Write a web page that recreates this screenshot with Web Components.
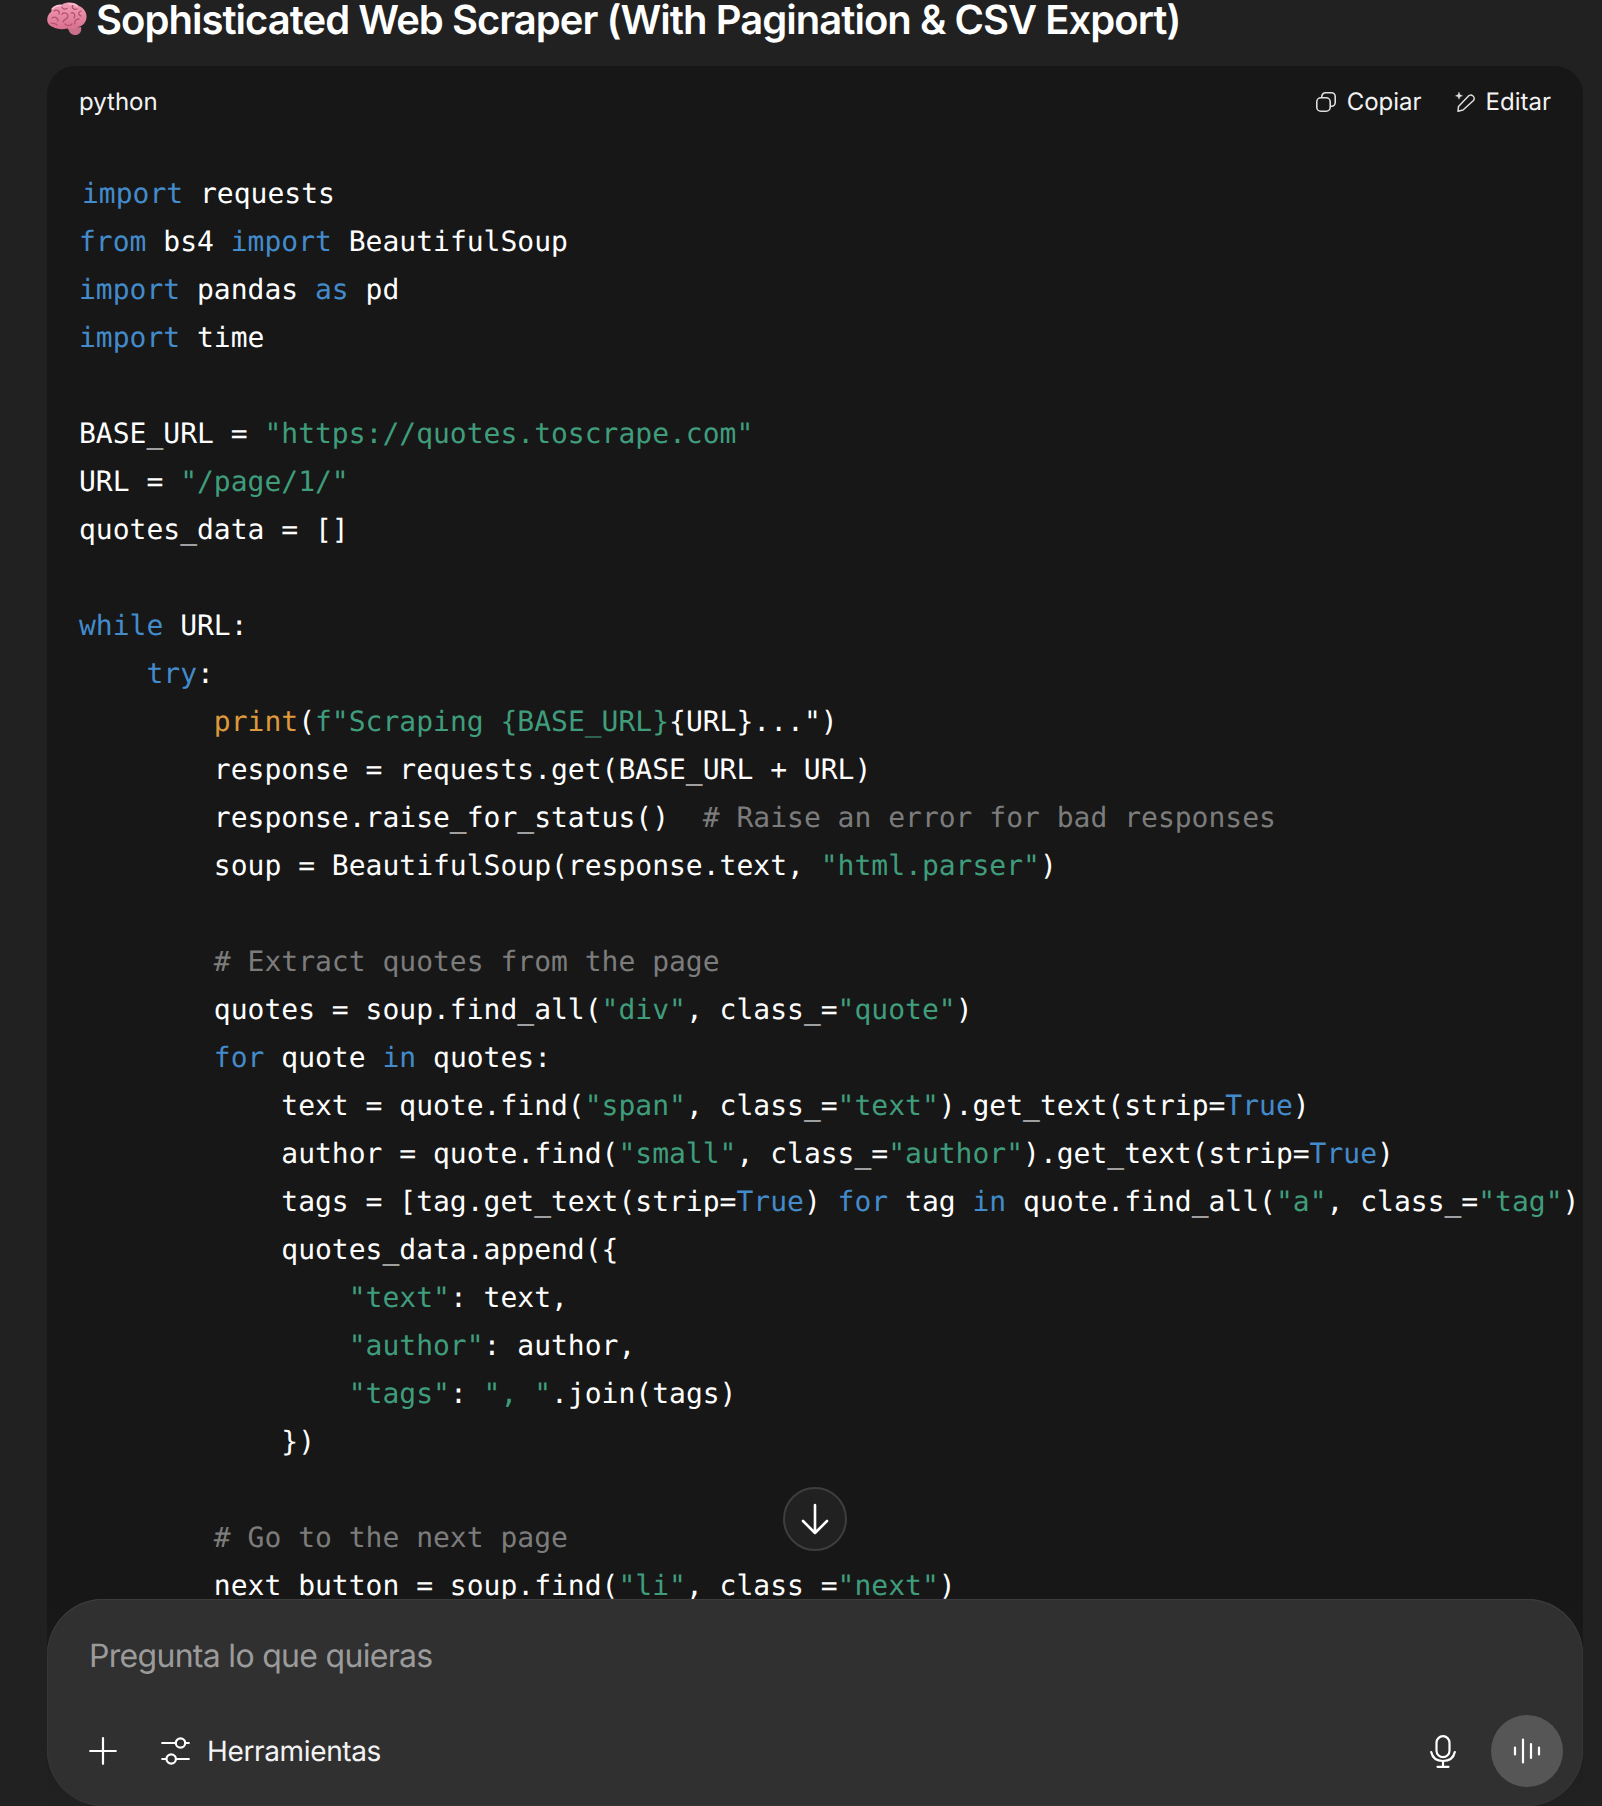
<!DOCTYPE html>
<html lang="es"><head><meta charset="utf-8"><title>Scraper</title>
<style>
html,body{margin:0;padding:0;background:#212121;height:100%;overflow:hidden}
body{width:1602px;height:1806px;font-family:Inter,"Liberation Sans",sans-serif;color:#fff}
</style></head><body>
<chat-view>
<chat-title slot="title">Sophisticated Web Scraper (With Pagination &amp; CSV Export)</chat-title>
<code-card slot="code" lang="python"></code-card>
<scroll-down slot="over"></scroll-down>
<chat-composer slot="over" placeholder="Pregunta lo que quieras"></chat-composer>
</chat-view>
<script>
const def=(name,html,init)=>customElements.define(name,class extends HTMLElement{
  constructor(){super();this.attachShadow({mode:'open'}).innerHTML=html;}
  connectedCallback(){init&&init(this)}
});
def('chat-view',`<style>
:host{display:flex;flex-direction:column;position:relative;width:1602px;height:1806px;overflow:hidden;box-sizing:border-box;padding:0 19px 0 47px;text-rendering:geometricPrecision}
</style><slot name="title"></slot><slot name="code"></slot><slot name="over"></slot>`);

def('chat-title',`<style>
:host{display:flex;align-items:center;gap:9px;height:40px;margin-bottom:26px;font:600 40px/40px Inter,"Liberation Sans",sans-serif;color:#fff;letter-spacing:-.97px;white-space:nowrap}
svg{width:40px;height:34px;flex:none;margin-top:-2px}
</style><svg viewBox="0 0 40 34" aria-hidden="true">
<defs><linearGradient id="g" x1="0" y1="0" x2="0" y2="1"><stop offset="0" stop-color="#f09db6"/><stop offset="1" stop-color="#d9708f"/></linearGradient></defs>
<path d="M21 26C22 31 25 33.500 29 33C33 32.500 35 29 34 25Z" fill="#c9708a"/>
<path d="M1 21C-1 17 1 12 4 10C5 5 10 2 15 2.500C20 -.5 28 0 32 4C37 6 40 11 39.500 15C39.500 20 36 24 31 25C28 27.500 23 28 20 26.500C15 28 9 27 6 25C4 24.500 2 23 1 21Z" fill="url(#g)"/>
<g fill="none" stroke="#b5506f" stroke-width="1.300" stroke-linecap="round"><path d="M7 9C10 7 13 9 12 12M15 3.500C14 6 17 8 20 6.500M26 3C24 6 27 8 30 7M34 9C31 10 31 13 34 14M5 16C8 14 11 16 11 19M15 12C17 10 21 11 21 14C21 17 17 17 16 20M24 11C27 10 29 13 27 16M32 17C29 17 27 19 28 22M18 22C20 24 23 24 25 22M4 21C7 22 9 21 10 23"/></g>
<path d="M5 7C8 4 12 3 15 4M22 2C25 1.500 28 2.500 30 4" fill="none" stroke="#fbc6d5" stroke-width="1.300" stroke-linecap="round"/>
</svg><span><slot></slot></span>`);

const k=s=>`<i class="k">${s}</i>`, t=s=>`<i class="s">${s}</i>`, c=s=>`<i class="c">${s}</i>`, b=s=>`<i class="b">${s}</i>`;
const CODE=[
`<span class="first">${k('import')} requests</span>`,
`${k('from')} bs4 ${k('import')} BeautifulSoup`,
`${k('import')} pandas ${k('as')} pd`,
`${k('import')} time`,
``,
`BASE_URL = ${t('"https://quotes.toscrape.com"')}`,
`URL = ${t('"/page/1/"')}`,
`quotes_data = []`,
``,
`${k('while')} URL:`,
`    ${k('try')}:`,
`        ${b('print')}(${t('f"Scraping {BASE_URL}')}{URL}...")`,
`        response = requests.get(BASE_URL + URL)`,
`        response.raise_for_status()  ${c('# Raise an error for bad responses')}`,
`        soup = BeautifulSoup(response.text, ${t('"html.parser"')})`,
``,
`        ${c('# Extract quotes from the page')}`,
`        quotes = soup.find_all(${t('"div"')}, class_=${t('"quote"')})`,
`        ${k('for')} quote ${k('in')} quotes:`,
`            text = quote.find(${t('"span"')}, class_=${t('"text"')}).get_text(strip=${k('True')})`,
`            author = quote.find(${t('"small"')}, class_=${t('"author"')}).get_text(strip=${k('True')})`,
`            tags = [tag.get_text(strip=${k('True')}) ${k('for')} tag ${k('in')} quote.find_all(${t('"a"')}, class_=${t('"tag"')})`,
`            quotes_data.append({`,
`                ${t('"text"')}: text,`,
`                ${t('"author"')}: author,`,
`                ${t('"tags"')}: ${t('", "')}.join(tags)`,
`            })`,
``,
`        ${c('# Go to the next page')}`,
`        next_button = soup.find(${t('"li"')}, class_=${t('"next"')})`
].map(l=>`<div class="l">${l}</div>`).join('');

def('code-card',`<style>
:host{display:flex;flex-direction:column;flex:1;min-height:0;background:linear-gradient(#171717 1534px,#212121 100%);border-radius:28px 28px 0 0;overflow:hidden;font-family:Inter,"Liberation Sans",sans-serif}
header{display:flex;align-items:center;justify-content:space-between;height:71px;padding:0 32px 0 32px;font-size:24px;color:#f3f3f3;flex:none}
.act{display:flex;gap:33px}
.btn{display:flex;align-items:center;gap:11px}
svg{width:20px;height:20px;flex:none}
.code{padding:33px 0 0 32px;font:28px/48px "DejaVu Sans Mono",monospace;color:#fff;white-space:pre}
.l{height:48px}
i{font-style:normal}
.k{color:#438bcb}.s{color:#3f9d7c}.c{color:#7c7c7c}.b{color:#dc9a3c}
.first{padding-left:3px}
</style>
<header><span id="lang"></span><div class="act">
<span class="btn"><svg viewBox="0 0 20 20" fill="none" stroke="#dedede" stroke-width="1.600" stroke-linejoin="round"><rect x=".8" y="5.800" width="13.400" height="13.400" rx="4"/><path d="M5.800 5.800V4.500A3.700 3.700 0 0 1 9.500 .8H15.500A3.700 3.700 0 0 1 19.200 4.500V10.500A3.700 3.700 0 0 1 15.500 14.200H14.200"/></svg>Copiar</span>
<span class="btn"><svg viewBox="0 0 20 20" fill="none" stroke="#dedede" stroke-width="1.500" stroke-linejoin="round" stroke-linecap="round"><path d="M3 19.200L3.500 14.500L13 4.500A3 3 0 0 1 18.500 8.500L8 18Z"/><path d="M4 .3L5 2.800L7.500 3.800L5 4.800L4 7.300L3 4.800L.5 3.800L3 2.800Z" fill="#dedede" stroke-width=".4"/></svg>Editar</span>
</div></header>
<div class="code">${CODE}</div>`,el=>{el.shadowRoot.getElementById('lang').textContent=el.getAttribute('lang')});

def('scroll-down',`<style>
:host{position:absolute;left:783px;top:1487px;width:64px;height:64px;box-sizing:border-box;border:2px solid #3e3e3e;border-radius:50%;background:#212121;display:flex;align-items:center;justify-content:center}
svg{width:30px;height:34px}
</style><svg viewBox="0 0 30 34" fill="none" stroke="#fff" stroke-width="2.600" stroke-linecap="round" stroke-linejoin="round"><path d="M15 3V31M3 19L15 31L27 19"/></svg>`);

def('chat-composer',`<style>
:host{position:absolute;left:47px;top:1599px;width:1536px;height:207px;box-sizing:border-box;background:#303030;border-radius:56px;box-shadow:inset 0 1px 0 #3d3d3d,inset 0 0 0 1px #363636;display:flex;flex-direction:column;justify-content:space-between;padding:37px 20px 19px 42px;font-family:Inter,"Liberation Sans",sans-serif}
.ph{font-size:32px;line-height:40px;color:#9b9b9b;letter-spacing:-.7px}
.row{display:flex;align-items:center;height:72px}
.tools{display:flex;align-items:center;gap:17px;margin-left:44px;font-size:28px;letter-spacing:-.36px;color:#f3f3f3}
.end{margin-left:auto;display:flex;align-items:center;gap:35px}
.voice{width:72px;height:72px;border-radius:50%;background:#565656;display:flex;align-items:center;justify-content:center}
svg{display:block;flex:none}
</style>
<div class="ph" id="ph"></div>
<div class="row">
<svg width="28" height="28" viewBox="0 0 28 28" stroke="#fff" stroke-width="2.200" stroke-linecap="round"><path d="M14 1.200V26.800M1.200 14H26.800"/></svg>
<div class="tools"><svg width="29" height="29" viewBox="0 0 29 29" fill="none" stroke="#fff" stroke-width="2.200" stroke-linecap="round"><path d="M1.200 6H14.500M24.500 6H27.800M1.200 22H5M15.500 22H27.800"/><circle cx="19.500" cy="6" r="4.700"/><circle cx="10.200" cy="22" r="4.700"/></svg>Herramientas</div>
<div class="end">
<svg width="26" height="33" viewBox="0 0 26 33" fill="none" stroke="#fff" stroke-width="2.200" stroke-linecap="round"><rect x="6.500" y="1.200" width="13" height="21" rx="6.500"/><path d="M1.200 17C2.500 23 7 26 13 26C19 26 23.500 23 24.800 17M13 26V31.800M7.500 31.800H18.500"/></svg>
<div class="voice"><svg width="28" height="26" viewBox="0 0 28 26" stroke="#fff" stroke-width="2.200" stroke-linecap="round"><path d="M2 9.500V16.500M10 1.500V24.500M18 6V20M26 9.500V16.500"/></svg></div>
</div></div>`,el=>{el.shadowRoot.getElementById('ph').textContent=el.getAttribute('placeholder')});
</script>
</body></html>
